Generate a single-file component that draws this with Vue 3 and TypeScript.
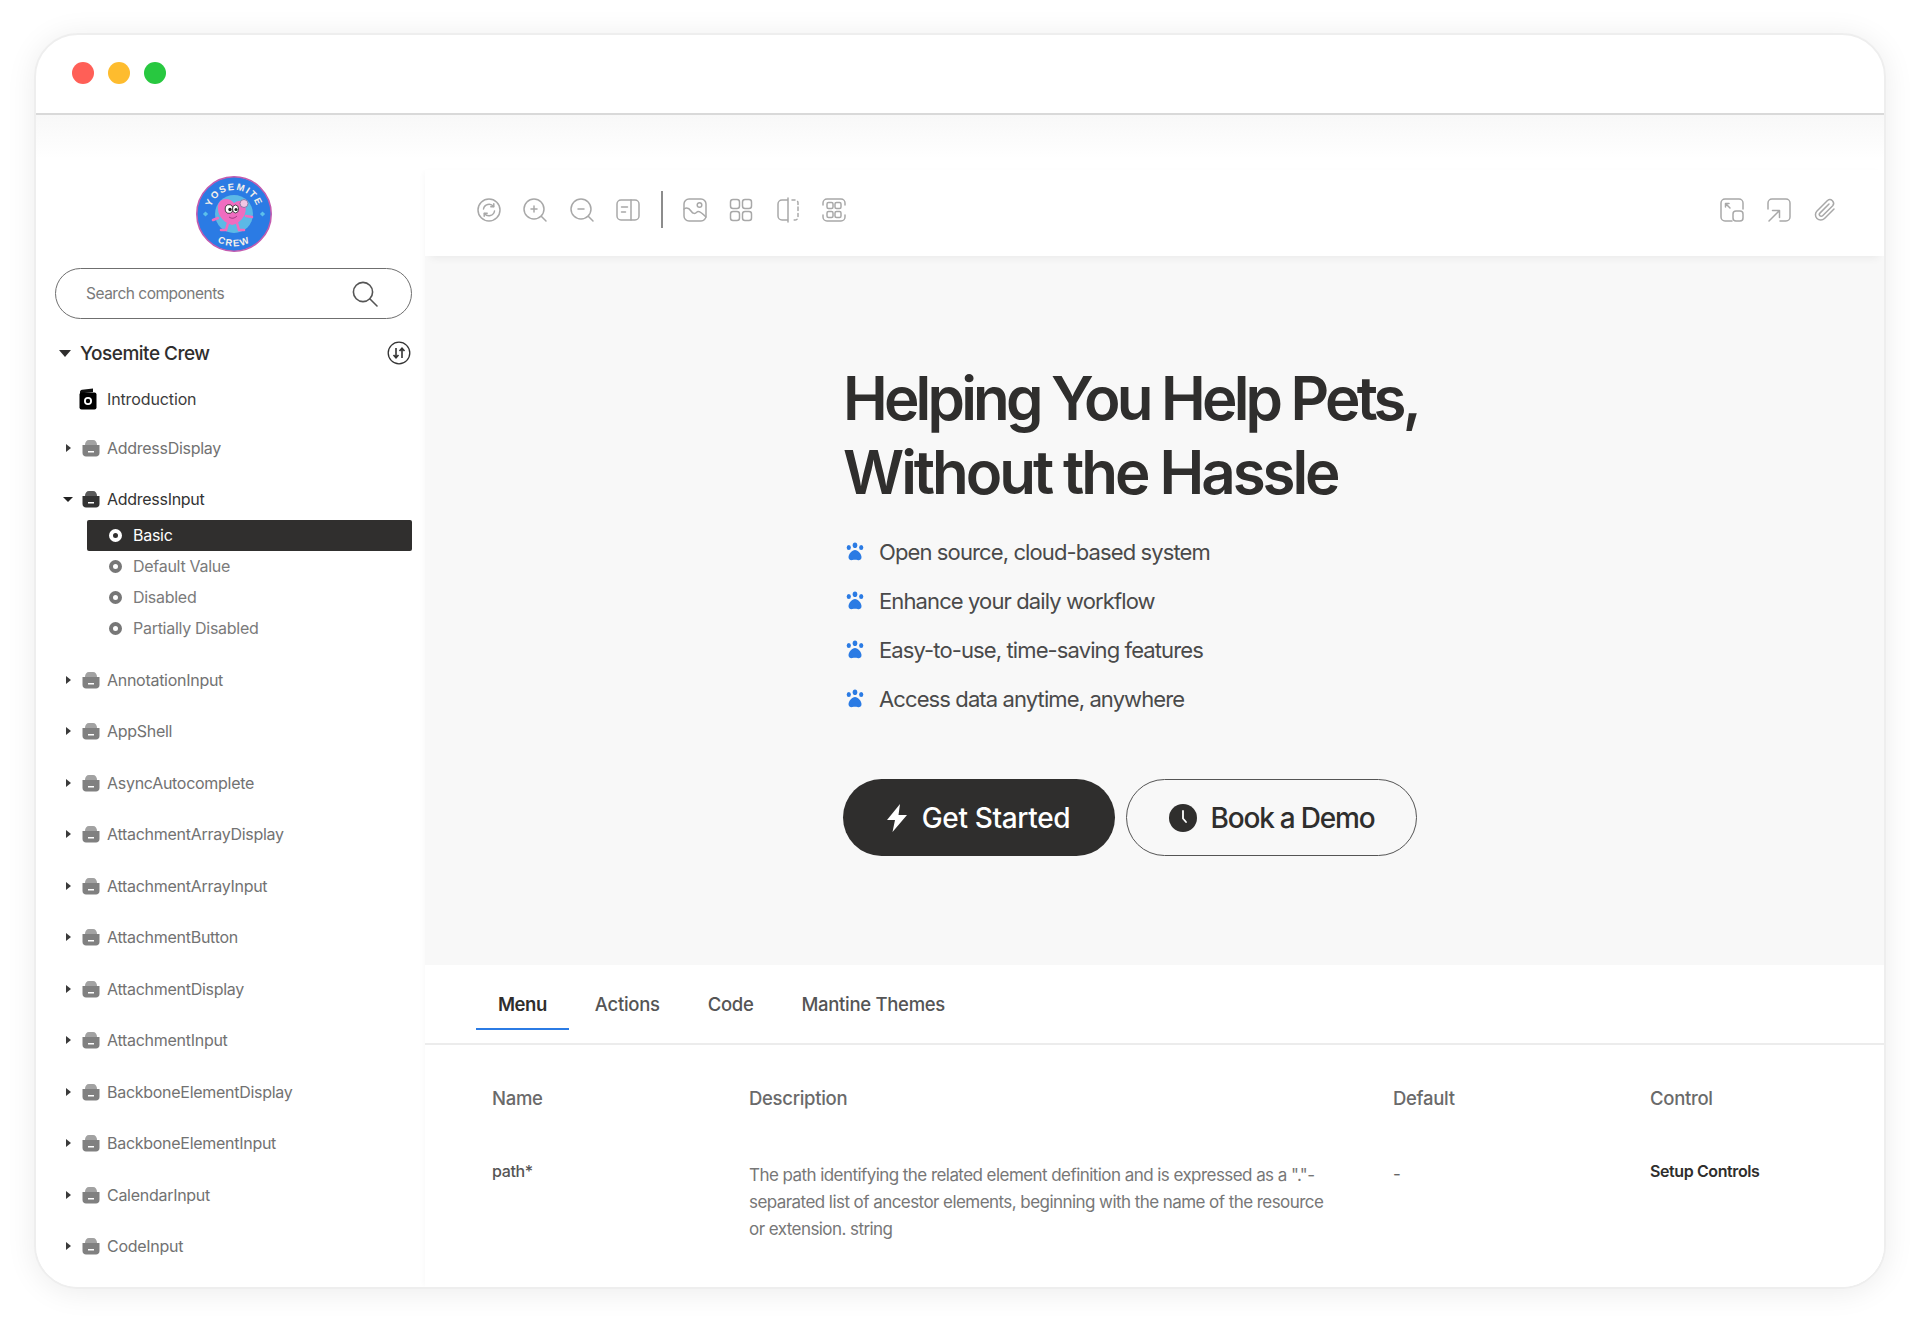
<script setup lang="ts">
const beforeRows: string[] = ['AddressDisplay']
const subs: string[] = ['Basic', 'Default Value', 'Disabled', 'Partially Disabled']
const afterRows: string[] = [
  'AnnotationInput', 'AppShell', 'AsyncAutocomplete', 'AttachmentArrayDisplay', 'AttachmentArrayInput',
  'AttachmentButton', 'AttachmentDisplay', 'AttachmentInput', 'BackboneElementDisplay',
  'BackboneElementInput', 'CalendarInput', 'CodeInput',
]
const features: string[] = [
  'Open source, cloud-based system',
  'Enhance your daily workflow',
  'Easy-to-use, time-saving features',
  'Access data anytime, anywhere',
]
const tabs: string[] = ['Menu', 'Actions', 'Code', 'Mantine Themes']
</script>

<template>
  <div class="page">
    <div class="window">
      <header class="titlebar">
        <span class="dot red"></span><span class="dot yellow"></span><span class="dot green"></span>
      </header>
      <div class="body">
        <aside class="sidebar">
          <svg class="logo" viewBox="0 0 76 76">
            <circle cx="38" cy="38" r="37.200" fill="#2b7be4" stroke="#c25bb0" stroke-width="1.600" />
            <circle cx="38" cy="38" r="19" fill="#5cb9e6" />
            <defs>
              <path id="arcTop" d="M15.450 46.200 A24 24 0 1 1 60.550 46.200" />
              <path id="arcBot" d="M8 51 A33 33 0 0 0 68 51" />
            </defs>
            <text class="logo-text"><textPath href="#arcTop" startOffset="50%" text-anchor="middle">YOSEMITE</textPath></text>
            <text class="logo-text"><textPath href="#arcBot" startOffset="50%" text-anchor="middle">CREW</textPath></text>
            <path d="M5 0l2.600 2.600L5 5.200 2.400 2.600z" transform="translate(4.500 35.400)" fill="#5cc0ea" />
            <path d="M5 0l2.600 2.600L5 5.200 2.400 2.600z" transform="translate(61.500 35.400)" fill="#5cc0ea" />
            <path d="M22 42l-5 2M50 40l6 1M32 47l-2 7h-5M41 47l2 7h5" fill="none" stroke="#f06cc0" stroke-width="2.600" stroke-linecap="round" />
            <path d="M36 49c-7-2-14-8-14-16-1-6 3-10 8-10 4 0 6 2 8 4 3-2 7-3 9 0 4 3 3 9 1 13-3 5-7 8-12 9z" fill="#f06cc0" />
            <ellipse cx="33" cy="33" rx="3.800" ry="4.300" fill="#fff" stroke="#222" stroke-width=".8" />
            <ellipse cx="39.500" cy="33" rx="3" ry="4" fill="#fff" stroke="#222" stroke-width=".8" />
            <circle cx="34" cy="33.500" r="1.700" fill="#222" /><circle cx="40" cy="33.500" r="1.500" fill="#222" />
            <path d="M33 41q4 3 8-1" fill="none" stroke="#a83a86" stroke-width="1" />
            <circle cx="48" cy="27.500" r="4" fill="#f3c6e4" stroke="#7a6a9a" stroke-width=".8" />
          </svg>

          <div class="search">
            <span class="search-text">Search components</span>
            <svg class="search-icon" viewBox="0 0 28 28" fill="none" stroke="#555" stroke-width="1.600" stroke-linecap="round">
              <circle cx="12" cy="12" r="9.600" /><path d="M19 19l7 7" />
            </svg>
          </div>

          <div class="root-row">
            <span class="caret-big"></span>
            <span class="root-label">Yosemite Crew</span>
            <svg class="sort-icon" viewBox="0 0 24 24" fill="none" stroke="#333" stroke-width="1.300">
              <circle cx="12" cy="12" r="10.800" />
              <path d="M9 7v9.500M6.500 14l2.500 2.800 2.500-2.800M15 17V7.500M12.500 10L15 7.200l2.500 2.800" stroke-width="1.600" />
            </svg>
          </div>

          <div class="intro-row">
            <svg class="row-icon intro-icon" viewBox="0 0 18 22">
              <path d="M1 5.500V3.800C1 2.600 2 2 3 1.800L14 .4v3.600z" fill="#111" />
              <rect x="0.500" y="4.400" width="17" height="17" rx="2" fill="#000" />
              <circle cx="9" cy="13" r="3.100" fill="none" stroke="#fff" stroke-width="1.800" />
            </svg>
            <span class="intro-label">Introduction</span>
          </div>

          <div v-for="name in beforeRows" :key="name" class="row first">
            <span class="caret-right"></span>
            <svg class="row-icon" viewBox="0 0 18 18">
              <path d="M3 6c0-3 1.500-5 4-5h4c2.500 0 4 2 4 5z" fill="#a2a2a2" />
              <path d="M0.500 6h17v8c0 2-1.500 3.500-3.500 3.500H4C2 17.500 0.500 16 0.500 14z" fill="#808080" />
              <rect x="6" y="12" width="6" height="1.500" fill="#fff" />
            </svg>
            <span>{{ name }}</span>
          </div>

          <div class="row open">
            <span class="caret-down"></span>
            <svg class="row-icon" viewBox="0 0 18 18">
              <path d="M3 6c0-3 1.500-5 4-5h4c2.500 0 4 2 4 5z" fill="#5a5a5a" />
              <path d="M0.500 6h17v8c0 2-1.500 3.500-3.500 3.500H4C2 17.500 0.500 16 0.500 14z" fill="#333" />
              <rect x="6" y="12" width="6" height="1.500" fill="#fff" />
            </svg>
            <span>AddressInput</span>
          </div>

          <ul class="subs">
            <li v-for="(s, i) in subs" :key="s" class="sub" :class="{ active: i === 0 }">
              <span class="ring"></span><span>{{ s }}</span>
            </li>
          </ul>

          <div v-for="name in afterRows" :key="name" class="row">
            <span class="caret-right"></span>
            <svg class="row-icon" viewBox="0 0 18 18">
              <path d="M3 6c0-3 1.500-5 4-5h4c2.500 0 4 2 4 5z" fill="#a2a2a2" />
              <path d="M0.500 6h17v8c0 2-1.500 3.500-3.500 3.500H4C2 17.500 0.500 16 0.500 14z" fill="#808080" />
              <rect x="6" y="12" width="6" height="1.500" fill="#fff" />
            </svg>
            <span>{{ name }}</span>
          </div>
        </aside>

        <main class="main">
          <div class="toolbar">
            <div class="tool-group">
              <svg class="tool" viewBox="0 0 24 24"><circle cx="12" cy="12" r="11" /><path d="M6.500 11a5.600 5.600 0 0 1 10-2.500M17.500 13a5.600 5.600 0 0 1-10 2.500" /><path d="M16.800 5.800v3h-3M7.200 18.200v-3h3" /></svg>
              <svg class="tool" viewBox="0 0 24 24"><circle cx="11" cy="11" r="10" /><path d="M18.500 18.500l4.500 4.500M11 8v6M8 11h6" /></svg>
              <svg class="tool" viewBox="0 0 24 24"><circle cx="11" cy="11" r="10" /><path d="M18.500 18.500l4.500 4.500M8 11h6" /></svg>
              <svg class="tool" viewBox="0 0 24 24"><rect x="1" y="2" width="22" height="20" rx="4" /><path d="M15 2v20M5.500 9h6M5.500 14h4" /></svg>
              <span class="divider"></span>
              <svg class="tool" viewBox="0 0 24 24"><rect x="1" y="1" width="22" height="22" rx="5" /><circle cx="16.500" cy="7" r="2.300" /><path d="M1 11c3-2 5-1 7 2s4 3 6 1 6 2 9 5" /></svg>
              <svg class="tool" viewBox="0 0 24 24"><rect x="1.500" y="1.500" width="9" height="9" rx="2.500" /><rect x="13.500" y="1.500" width="9" height="9" rx="2.500" /><rect x="1.500" y="13.500" width="9" height="9" rx="2.500" /><rect x="13.500" y="13.500" width="9" height="9" rx="2.500" /></svg>
              <svg class="tool" viewBox="0 0 24 24"><path d="M12 2H6a4 4 0 0 0-4 4v12a4 4 0 0 0 4 4h6M12 0v24" /><path d="M16 2h3a3 3 0 0 1 3 3v14a3 3 0 0 1-3 3h-3M22 9v6" stroke-dasharray="3 3" /></svg>
              <svg class="tool" viewBox="0 0 24 24"><path d="M1 7V5a4 4 0 0 1 4-4h14a4 4 0 0 1 4 4v2M1 17v2a4 4 0 0 0 4 4h14a4 4 0 0 0 4-4v-2" /><rect x="5" y="4.500" width="6" height="6" rx="1.500" /><rect x="13" y="4.500" width="6" height="6" rx="1.500" /><rect x="5" y="13.500" width="6" height="6" rx="1.500" /><rect x="13" y="13.500" width="6" height="6" rx="1.500" /></svg>
            </div>
            <div class="tool-group">
              <svg class="tool" viewBox="0 0 24 24"><path d="M12 23H5a4 4 0 0 1-4-4V5a4 4 0 0 1 4-4h14a4 4 0 0 1 4 4v6" /><rect x="13" y="13" width="10" height="10" rx="3" /><path d="M10 10L5.500 5.500M5.500 9V5.500H9" /></svg>
              <svg class="tool" viewBox="0 0 24 24"><path d="M1 11V5a4 4 0 0 1 4-4h14a4 4 0 0 1 4 4v14a4 4 0 0 1-4 4h-6" /><path d="M2 23l10-10M5.500 12.500H12.500V19.500" /></svg>
              <svg class="tool" viewBox="0 0 24 24"><path d="M21 11L11.500 20.500a5.300 5.300 0 0 1-7.500-7.500L14.500 2.500a3.700 3.700 0 0 1 5.200 5.200L9.600 17.800a1.900 1.900 0 0 1-2.700-2.700L16 6" /></svg>
            </div>
          </div>

          <section class="hero">
            <h1 class="title"><span class="line-a">Helping You Help Pets,</span><span class="line-b">Without the Hassle</span></h1>
            <ul class="features">
              <li v-for="f in features" :key="f" class="feature">
                <svg class="paw" viewBox="0 0 20 20" fill="#2b7be4">
                  <ellipse cx="10" cy="3.200" rx="2.300" ry="2.800" />
                  <ellipse cx="3.800" cy="5.500" rx="2.100" ry="2.500" />
                  <ellipse cx="16.200" cy="5.500" rx="2.100" ry="2.500" />
                  <path d="M10 8c3 0 6.500 4 6.500 7.200 0 2.800-2.500 3.300-4 2.800-1.500-.4-3.500-.4-5 0-1.500.5-4-.1-4-2.800C3.500 12 7 8 10 8z" />
                </svg>
                <span>{{ f }}</span>
              </li>
            </ul>
            <div class="actions">
              <button class="btn primary" type="button">
                <svg class="btn-icon" viewBox="0 0 22 28" fill="#fff"><path d="M14 0L1 16h8l-2.500 12L21 11h-8.500z" /></svg>
                Get Started
              </button>
              <button class="btn ghost" type="button">
                <svg class="btn-icon clock" viewBox="0 0 28 28"><circle cx="14" cy="14" r="14" fill="#2f2e2d" /><path d="M14 7v7.500l3 3.500" fill="none" stroke="#fff" stroke-width="1.800" stroke-linecap="round" /></svg>
                Book a Demo
              </button>
            </div>
          </section>

          <nav class="tabs">
            <span v-for="(t, i) in tabs" :key="t" class="tab" :class="{ current: i === 0 }">{{ t }}</span>
          </nav>

          <section class="table">
            <div class="th">Name</div>
            <div class="th">Description</div>
            <div class="th">Default</div>
            <div class="th">Control</div>
            <div class="td-name">path*</div>
            <div class="td-desc">The path identifying the related element definition and is expressed as a "."-separated list of ancestor elements, beginning with the name of the resource or extension. string</div>
            <div class="td-def">-</div>
            <div class="td-ctl">Setup Controls</div>
          </section>
        </main>
      </div>
    </div>
  </div>
</template>

<style scoped>
.page {
  width: 1920px;
  height: 1322px;
  padding: 33px 34px 33px 34px;
  box-sizing: border-box;
  background: #fff;
  font-family: Inter, "Noto Sans", sans-serif;
  color: #2f2e2d;
}
.window {
  height: 100%;
  box-sizing: border-box;
  border: 2px solid #eeeeee;
  border-radius: 44px;
  box-shadow: 0 3px 30px rgba(0, 0, 0, 0.08);
  background: #fff;
  display: flex;
  flex-direction: column;
  overflow: hidden;
}
.titlebar {
  height: 80px;
  flex: none;
  box-sizing: border-box;
  border-bottom: 2px solid #d9d9d9;
  display: flex;
  align-items: center;
  padding: 0 0 2px 36px;
  gap: 14px;
}
.dot { width: 22px; height: 22px; border-radius: 50%; }
.red { background: #ff5f57; }
.yellow { background: #febc2e; }
.green { background: #28c840; }
.body {
  flex: 1;
  min-height: 0;
  display: flex;
  background: linear-gradient(#f8f8f8, #fff 44px);
}
.sidebar {
  width: 389px;
  flex: none;
  padding-top: 61px;
  box-sizing: border-box;
  font-size: 16px;
  letter-spacing: -0.28px;
}
.logo { display: block; width: 76px; height: 76px; margin-left: 160px; }
.logo-text { font: 800 9.500px "Liberation Sans", sans-serif; fill: #f6f0ea; letter-spacing: 1.500px; }
.search {
  margin: 16px 0 0 19px;
  width: 357px;
  height: 51px;
  box-sizing: border-box;
  border: 1.500px solid #6f6f6f;
  border-radius: 26px;
  display: flex;
  align-items: center;
  justify-content: space-between;
  padding: 0 32px 0 30px;
}
.search-text { font-size: 15.500px; color: #7a7a7a; letter-spacing: -0.5px; }
.search-icon { width: 28px; height: 28px; }
.root-row {
  margin: 19px 0 0 23px;
  width: 353px;
  height: 31px;
  display: flex;
  align-items: center;
}
.caret-big {
  width: 0; height: 0;
  border-left: 6.500px solid transparent;
  border-right: 6.500px solid transparent;
  border-top: 7.500px solid #2f2e2d;
  margin-right: 9px;
}
.root-label { font-size: 19px; font-weight: 500; letter-spacing: -0.5px; flex: 1; }
.sort-icon { width: 24px; height: 24px; margin: -2px 1px 0 0; }
.intro-row {
  margin: 14px 0 0 43px;
  height: 31px;
  display: flex;
  align-items: center;
  gap: 10px;
  color: #3c3c3c;
  letter-spacing: -0.12px;
}
.intro-icon { width: 18px; height: 22px; color: #000; }
.row-icon { flex: none; }
.row {
  margin: 20.500px 0 0 29px;
  height: 31px;
  display: flex;
  align-items: center;
  color: #727272;
}
.row.first { margin-top: 18px; }
.row .row-icon { width: 18px; height: 18px; margin-right: 7px; }
.caret-right {
  width: 0; height: 0;
  border-top: 4.500px solid transparent;
  border-bottom: 4.500px solid transparent;
  border-left: 5px solid #3a3a3a;
  margin: 0 11.500px 0 0.500px;
}
.caret-down {
  width: 0; height: 0;
  border-left: 5px solid transparent;
  border-right: 5px solid transparent;
  border-top: 5.500px solid #222;
  margin: 0 9px 0 -2px;
}
.row.open { color: #333; }
.subs { list-style: none; margin: 5px 0 0 51px; padding: 0; width: 325px; }
.sub {
  height: 31px;
  box-sizing: border-box;
  display: flex;
  align-items: center;
  padding-left: 22px;
  gap: 11px;
  color: #7a7a7a;
  border-radius: 2px;
}
.sub.active { background: #302f2e; color: #fff; }
.ring {
  width: 13px; height: 13px;
  box-sizing: border-box;
  border-radius: 50%;
  border: 4px solid #777;
  background: #fff;
}
.active .ring { border-color: #fff; background: #302f2e; }
.main {
  flex: 1;
  min-width: 0;
  margin-top: 55px;
  display: flex;
  flex-direction: column;
  background: #fff;
  box-shadow: -3px 0 6px -2px rgba(0, 0, 0, 0.03);
}
.toolbar {
  height: 86px;
  flex: none;
  box-sizing: border-box;
  display: flex;
  align-items: center;
  justify-content: space-between;
  padding: 0 47px 7px 52px;
  position: relative;
  box-shadow: 0 7px 8px -5px rgba(0, 0, 0, 0.06);
}
.tool-group { display: flex; align-items: center; gap: 22.400px; }
.tool {
  width: 24px; height: 24px;
  fill: none;
  stroke: #a8a8a8;
  stroke-width: 1.500;
  stroke-linecap: round;
  stroke-linejoin: round;
  overflow: visible;
}
.divider { width: 2px; height: 37px; background: #8c8c8c; margin: 0 -2.500px 0 -1.500px; }
.hero {
  height: 709px;
  flex: none;
  box-sizing: border-box;
  background: #f8f8f8;
  padding: 105px 0 0 418px;
}
.title {
  margin: 0;
  font-size: 60px;
  line-height: 74px;
  font-weight: 600;
  color: #2f2e2d;
}
.line-a { display: block; letter-spacing: -3.800px; }
.line-b { display: block; letter-spacing: -3.050px; }
.features { list-style: none; margin: 18.500px 0 0; padding: 0; }
.feature {
  height: 49px;
  display: flex;
  align-items: center;
  gap: 14px;
  font-size: 22px;
  letter-spacing: -0.89px;
  color: #4a4a4a;
}
.paw { width: 20px; height: 20px; margin-left: 2px; }
.actions { display: flex; gap: 11px; margin-top: 55.500px; }
.btn {
  height: 77px;
  border-radius: 39px;
  display: flex;
  align-items: center;
  justify-content: center;
  gap: 14px;
  font: 500 28px Inter, sans-serif;
  letter-spacing: -1.200px;
  box-sizing: border-box;
}
.primary { width: 272px; background: #2f2e2d; color: #fff; border: 0; padding-left: 4px; letter-spacing: -0.350px; }
.ghost { width: 291px; background: transparent; color: #2f2e2d; border: 1.500px solid #555; }
.btn-icon { width: 22px; height: 28px; }
.btn-icon.clock { width: 28px; height: 28px; }
.tabs {
  height: 80px;
  flex: none;
  box-sizing: border-box;
  border-bottom: 2px solid #ececec;
  display: flex;
  align-items: flex-start;
  padding-left: 51px;
  gap: 4px;
}
.tab {
  height: 65px;
  box-sizing: border-box;
  padding: 14px 22px 0;
  display: flex;
  align-items: center;
  font-size: 18.500px;
  font-weight: 500;
  letter-spacing: -0.300px;
  color: #555;
  border-bottom: 2.500px solid transparent;
}
.tab.current { color: #2f2e2d; font-weight: 600; letter-spacing: -0.450px; border-bottom-color: #2b7be4; }
.table {
  display: grid;
  grid-template-columns: 257px 644px 257px 1fr;
  grid-template-rows: auto auto;
  padding: 40px 0 0 67px;
  align-items: start;
}
.th {
  font-size: 18.500px;
  line-height: 27px;
  font-weight: 500;
  letter-spacing: -0.300px;
  color: #6a6a6a;
  padding-bottom: 46px;
}
.td-name { font-size: 16px; line-height: 27px; color: #555; font-weight: 500; letter-spacing: -0.350px; }
.td-desc {
  width: 585px;
  font-size: 17px;
  line-height: 27px;
  color: #777;
  letter-spacing: -0.560px;
  padding-top: 4px;
}
.td-def { font-size: 17px; line-height: 27px; color: #666; padding-top: 3px; }
.td-ctl { font-size: 16px; line-height: 27px; font-weight: 600; letter-spacing: -0.400px; color: #2f2e2d; }
</style>
